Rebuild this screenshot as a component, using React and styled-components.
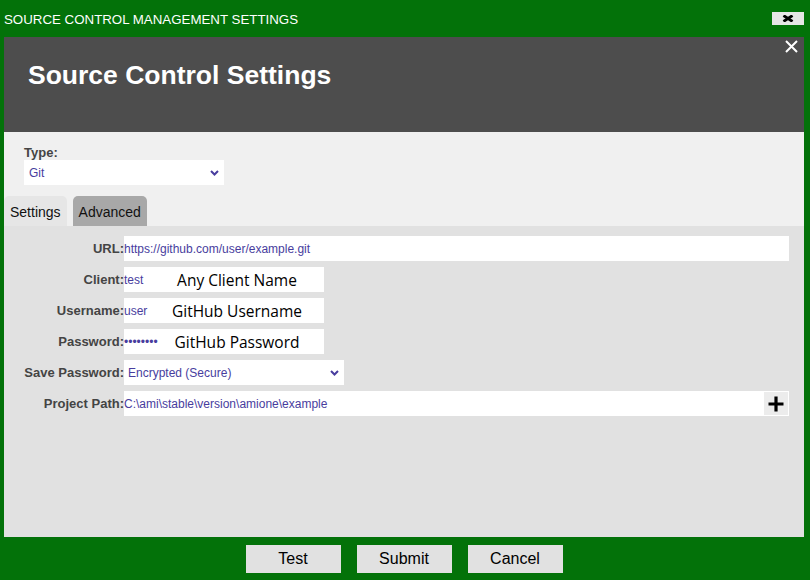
import React from 'react'
import styled, { createGlobalStyle } from 'styled-components'

const GlobalStyle = createGlobalStyle`
  html, body {
    margin: 0;
    padding: 0;
    background: #037209;
  }
  body {
    font-family: "Liberation Sans", Arial, sans-serif;
  }
`

const Window = styled.div`
  width: 810px;
  height: 580px;
  box-sizing: border-box;
  background: #037209;
  padding: 0 6px 0 4px;
  display: flex;
  flex-direction: column;
`

const TitleBar = styled.div`
  height: 37px;
  display: flex;
  align-items: center;
  justify-content: space-between;
  color: #ffffff;
  font-size: 13.3px;
  padding-top: 1px;
  box-sizing: border-box;
`

const WindowClose = styled.button`
  width: 32px;
  height: 13px;
  margin-top: -1px;
  padding: 0;
  border: none;
  background: #e6e6e6;
  display: flex;
  align-items: center;
  justify-content: center;
  cursor: pointer;
`

const Panel = styled.div`
  flex: 1;
  display: flex;
  flex-direction: column;
  min-height: 0;
`

const Header = styled.div`
  position: relative;
  height: 95px;
  box-sizing: border-box;
  background: #4d4d4d;
  padding: 25px 0 0 24px;
`

const Heading = styled.h1`
  margin: 0;
  color: #ffffff;
  font-size: 26.5px;
  line-height: 1;
  font-weight: bold;
`

const HeaderClose = styled.button`
  position: absolute;
  top: 2px;
  right: 6px;
  width: 14px;
  height: 14px;
  padding: 0;
  border: none;
  background: transparent;
  display: flex;
  align-items: center;
  justify-content: center;
  cursor: pointer;
`

const TypeSection = styled.div`
  background: #f0f0f0;
  padding: 13px 0 0 20px;
  height: 64px;
  box-sizing: border-box;
`

const TypeLabel = styled.div`
  font-size: 13px;
  line-height: 15px;
  font-weight: bold;
  color: #444444;
`

const SelectBox = styled.div`
  width: ${p => p.width}px;
  height: 25px;
  box-sizing: border-box;
  background: #ffffff;
  display: flex;
  align-items: center;
  justify-content: space-between;
  padding: 0 5px 0 ${p => p.padLeft || 5}px;
  font-size: 12px;
  color: #483d9e;
`

const TabRow = styled.div`
  display: flex;
  gap: 6px;
  background: #f0f0f0;
  height: 30px;
  align-items: flex-end;
`

const Tab = styled.div`
  height: 30px;
  box-sizing: border-box;
  padding: 0 6px;
  display: flex;
  align-items: center;
  padding-top: 2px;
  font-size: 14px;
  color: #111111;
  border-radius: 5px 5px 0 0;
  background: ${p => (p.active ? '#e6e6e6' : '#a8a8a8')};
  cursor: pointer;
`

const Content = styled.div`
  flex: 1;
  background: #e1e1e1;
  padding: 10px 15px 0 0;
`

const Form = styled.div`
  display: grid;
  grid-template-columns: 120px 1fr;
  row-gap: 6px;
  align-items: center;
`

const Label = styled.div`
  text-align: right;
  font-size: 13px;
  font-weight: bold;
  color: #444444;
`

const Field = styled.div`
  position: relative;
  width: ${p => (p.width ? `${p.width}px` : 'auto')};
  height: 25px;
  background: #ffffff;
  display: flex;
  align-items: center;
  justify-content: space-between;
  font-size: 12px;
  color: #483d9e;
`

const Note = styled.span`
  position: absolute;
  left: 26px;
  right: 0;
  top: 0;
  bottom: 0;
  display: flex;
  align-items: center;
  justify-content: center;
  font-family: "Open Sans", "Noto Sans", sans-serif;
  font-size: 15.5px;
  color: #000000;
`

const Dots = styled.span`
  font-size: 12px;
  letter-spacing: 0;
`

const AddButton = styled.button`
  width: 24px;
  height: 23px;
  margin-right: 1px;
  padding: 0;
  border: none;
  background: #ececec;
  display: flex;
  align-items: center;
  justify-content: center;
  cursor: pointer;
`

const Footer = styled.div`
  height: 43px;
  display: flex;
  justify-content: center;
  gap: 16px;
  padding-top: 8px;
  box-sizing: border-box;
`

const FooterButton = styled.button`
  width: 95px;
  height: 28px;
  border: none;
  background: #e1e1e1;
  font-family: "Liberation Sans", Arial, sans-serif;
  font-size: 16px;
  color: #000000;
  padding: 0;
  cursor: pointer;
`

const Chevron = () => (
  <svg width="9" height="6" viewBox="0 0 9 6">
    <polyline points="1,1 4.5,4.5 8,1" fill="none" stroke="#483d9e" strokeWidth="2" />
  </svg>
)

const rows = [
  { label: 'URL:', value: 'https://github.com/user/example.git', full: true },
  { label: 'Client:', value: 'test', note: 'Any Client Name', width: 200 },
  { label: 'Username:', value: 'user', note: 'GitHub Username', width: 200 },
  { label: 'Password:', value: '••••••••', note: 'GitHub Password', width: 200, secret: true },
]

export default function App() {
  return (
    <>
      <GlobalStyle />
      <Window>
        <TitleBar>
          <span>SOURCE CONTROL MANAGEMENT SETTINGS</span>
          <WindowClose>
            <svg width="12" height="7" viewBox="0 0 12 7">
              <path d="M1.5 0.5 L10.5 6.5 M10.5 0.5 L1.5 6.5" stroke="#000" strokeWidth="2.8" />
            </svg>
          </WindowClose>
        </TitleBar>
        <Panel>
          <Header>
            <Heading>Source Control Settings</Heading>
            <HeaderClose>
              <svg width="13" height="13" viewBox="0 0 13 13">
                <path d="M1 1 L12 12 M12 1 L1 12" stroke="#fff" strokeWidth="2" />
              </svg>
            </HeaderClose>
          </Header>
          <TypeSection>
            <TypeLabel>Type:</TypeLabel>
            <SelectBox width={200}>
              <span>Git</span>
              <Chevron />
            </SelectBox>
          </TypeSection>
          <TabRow>
            <Tab active>Settings</Tab>
            <Tab>Advanced</Tab>
          </TabRow>
          <Content>
            <Form>
              {rows.map(r => (
                <React.Fragment key={r.label}>
                  <Label>{r.label}</Label>
                  <Field width={r.width}>
                    {r.secret ? <Dots>{r.value}</Dots> : <span>{r.value}</span>}
                    {r.note && <Note>{r.note}</Note>}
                  </Field>
                </React.Fragment>
              ))}
              <Label>Save Password:</Label>
              <SelectBox width={220} padLeft={4}>
                <span>Encrypted (Secure)</span>
                <Chevron />
              </SelectBox>
              <Label>Project Path:</Label>
              <Field>
                <span>C:\ami\stable\version\amione\example</span>
                <AddButton>
                  <svg width="16" height="16" viewBox="0 0 16 16">
                    <path d="M8 0.5 V15.5 M0.5 8 H15.5" stroke="#000" strokeWidth="3.2" />
                  </svg>
                </AddButton>
              </Field>
            </Form>
          </Content>
        </Panel>
        <Footer>
          <FooterButton>Test</FooterButton>
          <FooterButton>Submit</FooterButton>
          <FooterButton>Cancel</FooterButton>
        </Footer>
      </Window>
    </>
  )
}
